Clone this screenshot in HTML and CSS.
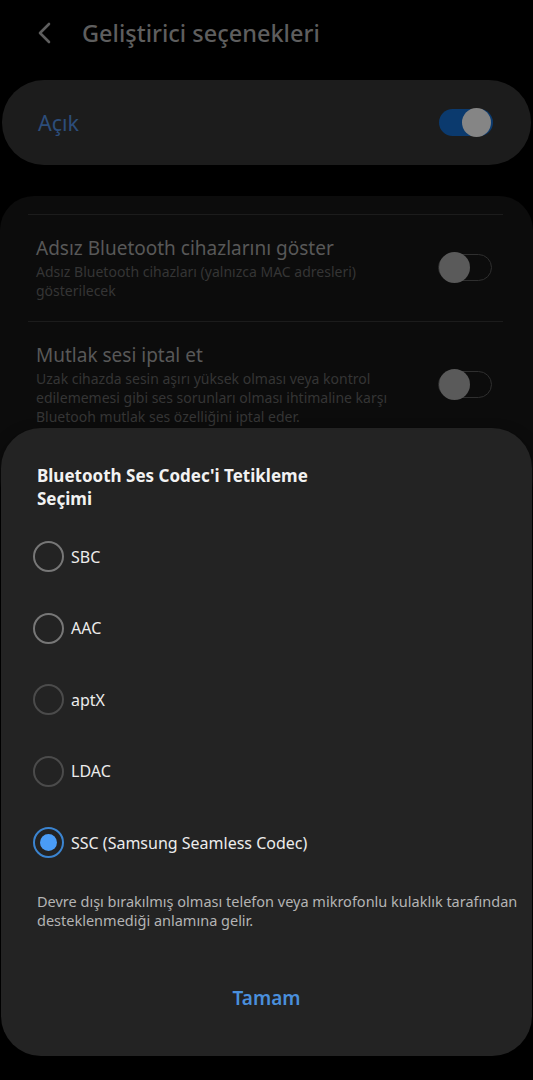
FILE: index.html
```html
<!DOCTYPE html>
<html lang="tr">
<head>
  <meta charset="UTF-8" />
  <meta name="viewport" content="width=device-width, initial-scale=1.0"/>
  <title>Geliştirici seçenekleri</title>
  <link rel="stylesheet" href="styles.css">
</head>
<body>
  <div class="page">
    <div class="app-bar">
      <svg class="back" width="16" height="24" viewBox="0 0 16 24">
        <path d="M12 3 L3 12 L12 21" fill="none" stroke="#5e5e5e" stroke-width="2.6" stroke-linecap="round" stroke-linejoin="round"/>
      </svg>
      <h1>Geliştirici seçenekleri</h1>
    </div>

    <div class="master-card">
      <span class="master-label">Açık</span>
      <div class="switch on"><div class="thumb"></div></div>
    </div>

    <div class="list-card">
      <div class="row">
        <div class="row-text">
          <div class="row-title">Adsız Bluetooth cihazlarını göster</div>
          <div class="row-sub">Adsız Bluetooth cihazları (yalnızca MAC adresleri) gösterilecek</div>
        </div>
        <div class="switch off"><div class="thumb"></div></div>
      </div>
      <div class="row">
        <div class="row-text">
          <div class="row-title">Mutlak sesi iptal et</div>
          <div class="row-sub">Uzak cihazda sesin aşırı yüksek olması veya kontrol edilememesi gibi ses sorunları olması ihtimaline karşı Bluetooh mutlak ses özelliğini iptal eder.</div>
        </div>
        <div class="switch off"><div class="thumb"></div></div>
      </div>
      <div class="row">
        <div class="row-text">
          <div class="row-title">Bluetooth AVRCP sürümü</div>
        </div>
      </div>
    </div>
  </div>

  <div class="dialog">
    <h2><span>Bluetooth Ses Codec'i Tetikleme</span><span>Seçimi</span></h2>
    <div class="options">
      <label class="option"><span class="radio light"></span>SBC</label>
      <label class="option"><span class="radio light"></span>AAC</label>
      <label class="option"><span class="radio"></span>aptX</label>
      <label class="option"><span class="radio"></span>LDAC</label>
      <label class="option"><span class="radio checked"></span>SSC (Samsung Seamless Codec)</label>
    </div>
    <p class="note">Devre dışı bırakılmış olması telefon veya mikrofonlu kulaklık tarafından desteklenmediği anlamına gelir.</p>
    <button class="ok-btn">Tamam</button>
  </div>
</body>
</html>
```

FILE: styles.css
```css
body {
  margin: 0;
  background: #000;
  font-family: "Noto Sans", sans-serif;
  width: 533px;
  height: 1080px;
  overflow: hidden;
  position: relative;
}

.page {
  padding-top: 11px;
}

.app-bar {
  display: flex;
  align-items: center;
  height: 44px;
  padding-left: 37px;
  gap: 29px;
}

.app-bar h1 {
  margin: 0;
  font-size: 23.5px;
  font-weight: 500;
  color: #5e5e5e;
}

.master-card {
  margin: 25px 2px 0;
  height: 85px;
  background: #1c1c1c;
  border-radius: 42px;
  display: flex;
  align-items: center;
  justify-content: space-between;
  padding: 0 38px 0 36px;
}

.master-label {
  font-size: 21.5px;
  color: #2c4d7a;
}

.switch {
  position: relative;
  flex-shrink: 0;
  width: 54px;
  height: 27px;
  border-radius: 14px;
  box-sizing: border-box;
}

.switch .thumb {
  position: absolute;
  top: 50%;
  width: 29px;
  height: 29px;
  margin-top: -14.5px;
  border-radius: 50%;
}

.switch.on {
  background: #0b3a6e;
}

.switch.on .thumb {
  right: 2px;
  background: #858585;
}

.switch.off {
  border: 1.5px solid #2f2f2f;
}

.switch.off .thumb {
  left: 0;
  background: #5a5a5a;
  width: 31px;
  height: 31px;
  margin-top: -15.5px;
}

.list-card {
  margin: 31px 0 0;
  background: #0c0c0c;
  border-radius: 34px;
  padding: 18px 30px 0 28px;
  height: 300px;
}

.row {
  display: flex;
  align-items: center;
  border-top: 1px solid #1c1c1c;
  padding: 20px 11px 21px 8px;
  gap: 28px;
}

.row-text {
  flex: 1;
}

.row-title {
  font-size: 19px;
  color: #585858;
  line-height: 26px;
}

.row-sub {
  font-size: 14px;
  color: #353535;
  line-height: 19px;
  margin-top: 1px;
}

.dialog {
  position: absolute;
  left: 1px;
  right: 1px;
  top: 428px;
  height: 628px;
  background: #232323;
  border-radius: 40px;
  box-shadow: 0 6px 14px rgba(0, 0, 0, 0.6);
  padding: 36px 0 0 36px;
  box-sizing: border-box;
}

.dialog h2 {
  margin: 0;
  display: flex;
  flex-direction: column;
  font-size: 17px;
  font-weight: 700;
  line-height: 23px;
  color: #f2f2f2;
}

.options {
  margin-top: 11px;
  display: flex;
  flex-direction: column;
}

.option {
  display: flex;
  align-items: center;
  height: 71.5px;
  gap: 7px;
  margin-left: -4px;
  font-size: 16px;
  color: #ececec;
}

.radio {
  width: 27px;
  height: 27px;
  border-radius: 50%;
  border: 2px solid #4b4b4b;
  position: relative;
}

.radio.light {
  border-color: #777;
}

.radio.checked {
  border-color: #3b84d0;
}

.radio.checked::after {
  content: "";
  position: absolute;
  left: 5px;
  top: 5px;
  width: 17px;
  height: 17px;
  border-radius: 50%;
  background: #4a9cf6;
}

.note {
  margin: 13px 0 0 0;
  font-size: 14.5px;
  line-height: 19px;
  color: #b4b4b4;
}

.ok-btn {
  display: block;
  margin: 55px auto 0;
  position: relative;
  left: -18px;
  background: none;
  border: none;
  font-family: "Noto Sans", sans-serif;
  font-size: 19px;
  font-weight: 600;
  color: #4a8fdc;
  padding: 0;
}
```
